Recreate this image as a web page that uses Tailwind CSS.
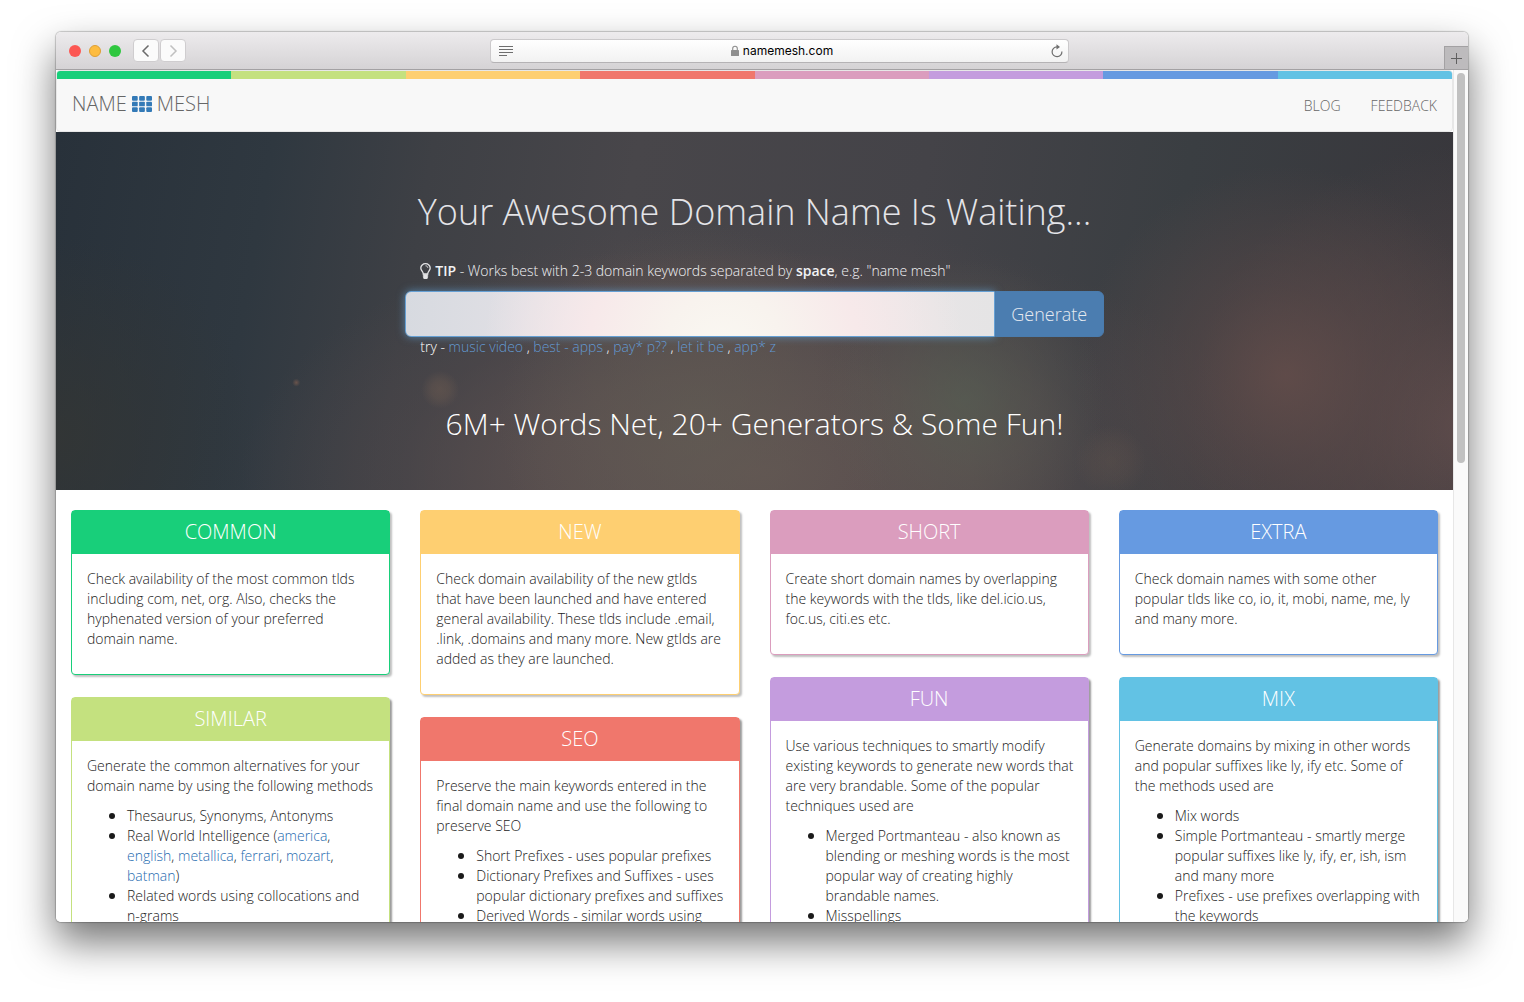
<!DOCTYPE html>
<html lang="en">
<head>
<meta charset="utf-8">
<title>Name Mesh</title>
<script src="https://cdn.jsdelivr.net/npm/@tailwindcss/browser@4"></script>
</head>
<body class="bg-white font-['Open_Sans',sans-serif] text-sm/5 font-light text-[#1a1a1a]">
<div class="flex h-screen flex-col overflow-hidden px-14 pt-8 pb-20">
  <div class="flex min-h-0 flex-1 flex-col rounded-[5px] shadow-[0_0_1px_1px_rgba(0,0,0,0.2),0_20px_40px_rgba(0,0,0,0.55)]">
    <!-- Browser toolbar -->
    <header class="flex h-[38px] shrink-0 rounded-t-[5px] border-b border-[#a3a1a3] bg-linear-to-b from-[#edebed] to-[#d5d3d5]">
      <div class="flex flex-1 items-center pl-[13px]">
        <div class="flex gap-2">
          <button aria-label="Close" class="size-3 rounded-full bg-[#fc5753]"></button>
          <button aria-label="Minimize" class="size-3 rounded-full border border-[#de9f34] bg-[#fdbc40]"></button>
          <button aria-label="Zoom" class="size-3 rounded-full bg-[#2fc73f]"></button>
        </div>
        <div class="ml-3 flex gap-px">
          <button aria-label="Back" class="flex h-[23px] w-[26px] items-center justify-center rounded border border-[#cfcdcf] bg-[#fbfbfb]">
            <svg class="size-3.5" viewBox="0 0 14 14" fill="none" stroke="#6b6b6b" stroke-width="1.5"><path d="M9.5 1.5 4 7l5.500 5.500"/></svg>
          </button>
          <button aria-label="Forward" class="flex h-[23px] w-[26px] items-center justify-center rounded border border-[#cfcdcf] bg-[#fbfbfb]">
            <svg class="size-3.5" viewBox="0 0 14 14" fill="none" stroke="#c0c0c0" stroke-width="1.500"><path d="M4.500 1.500 10 7l-5.500 5.500"/></svg>
          </button>
        </div>
      </div>
      <div class="ml-[22px] flex w-[41%] items-center">
        <div class="flex h-6 w-full items-center rounded border border-[#cbc9cb] border-b-[#b5b3b5] bg-linear-to-b from-white to-[#f2f2f2] pr-[5px] pl-2">
          <svg class="h-3 w-3.5" viewBox="0 0 14 12" stroke="#6e6e6e" stroke-width="1"><path d="M0 1.500h14M0 4.500h14M0 7.500h14M0 10.500h8"/></svg>
          <div class="flex flex-1 items-center justify-center gap-1">
            <svg class="h-3 w-2" viewBox="0 0 8 12"><rect y="5" width="8" height="6" rx=".6" fill="#8e8e8e"/><path d="M1.700 5.500V3.600a2.300 2.300 0 0 1 4.600 0v1.900" fill="none" stroke="#8e8e8e" stroke-width="1.100"/></svg>
            <span class="font-['Inter',sans-serif] text-xs/4 font-normal text-black">namemesh.com</span>
          </div>
          <button aria-label="Reload"><svg class="h-3.5 w-3" viewBox="0 0 12 14" fill="none" stroke="#6e6e6e" stroke-width="1.200"><path d="M10.900 7.500A4.900 4.900 0 1 1 6 2.900"/><path d="M5.500.2 9 2.900 5.500 5.600Z" fill="#6e6e6e" stroke="none"/></svg></button>
        </div>
      </div>
      <div class="flex flex-1 items-end justify-end">
        <button aria-label="New tab" class="flex h-[23px] w-6 items-center justify-center border-t border-l border-[#a3a1a3] bg-[#bdbbbd]">
          <svg class="size-[11px]" viewBox="0 0 11 11" stroke="#606060" stroke-width="1"><path d="M0 5.500h11M5.500 0v11"/></svg>
        </button>
      </div>
    </header>

    <!-- Page viewport -->
    <div class="flex min-h-0 flex-1 overflow-hidden rounded-b-[5px] bg-white">
      <div class="min-w-0 flex-1">
        <nav class="overflow-hidden rounded border border-[#e7e7e7] bg-[#f8f8f8]">
          <div class="grid h-2 grid-cols-8">
            <div class="bg-[#18cf7a]"></div><div class="bg-[#c4e17f]"></div><div class="bg-[#fecf71]"></div><div class="bg-[#f0776c]"></div>
            <div class="bg-[#db9dbe]"></div><div class="bg-[#c49cde]"></div><div class="bg-[#669ae1]"></div><div class="bg-[#62c2e4]"></div>
          </div>
          <div class="flex h-[52px] items-baseline justify-between px-[15px] pt-[15px] text-[#666]">
            <a href="#" class="flex items-center gap-[5px] text-xl/5">NAME
              <svg class="h-4 w-5" viewBox="0 0 21 17" preserveAspectRatio="none" fill="#337ab7"><rect width="6" height="5" rx="1"/><rect x="7.500" width="6" height="5" rx="1"/><rect x="15" width="6" height="5" rx="1"/><rect y="6" width="6" height="5" rx="1"/><rect x="7.500" y="6" width="6" height="5" rx="1"/><rect x="15" y="6" width="6" height="5" rx="1"/><rect y="12" width="6" height="5" rx="1"/><rect x="7.500" y="12" width="6" height="5" rx="1"/><rect x="15" y="12" width="6" height="5" rx="1"/></svg>
              MESH</a>
            <div class="flex gap-[30px]"><a href="#">BLOG</a><a href="#">FEEDBACK</a></div>
          </div>
        </nav>

        <section class="h-[358px] bg-[#48464a] bg-[radial-gradient(circle_at_17.2%_70%,#6a544c_0,transparent_4px),radial-gradient(circle_at_27.5%_72%,rgba(107,90,80,0.55)_0,rgba(107,90,80,0.4)_9px,transparent_19px),radial-gradient(circle_at_75.5%_92%,rgba(106,88,78,0.3)_0,rgba(106,88,78,0.2)_18px,transparent_36px),radial-gradient(circle_at_65%_75%,rgba(88,98,84,0.6)_0,rgba(92,94,84,0.35)_70px,transparent_140px),radial-gradient(circle_at_46%_82%,rgba(98,94,84,0.6)_0,rgba(98,92,84,0.4)_90px,transparent_200px),radial-gradient(circle_at_88%_68%,rgba(102,78,75,0.8)_0,rgba(94,74,73,0.5)_90px,transparent_210px),radial-gradient(circle_at_101%_82%,rgba(108,84,82,0.7)_0,rgba(100,80,78,0.4)_110px,transparent_280px),radial-gradient(ellipse_at_50%_95%,rgba(98,84,82,0.95)_0,rgba(92,80,79,0.8)_22%,rgba(84,74,76,0.4)_36%,transparent_52%),radial-gradient(ellipse_at_47%_50%,rgba(98,78,80,0.6)_0,transparent_25%),radial-gradient(circle_at_0%_85%,rgba(52,54,52,0.8)_0,transparent_200px),linear-gradient(100deg,#28313a_0%,#2f3840_15%,#3e4045_26%,#48464a_40%,#444348_60%,#3a3e42_78%,#38363b_100%)]">
          <div class="mx-auto flex w-1/2 flex-col pt-14">
            <h1 class="text-center text-4xl/12 whitespace-nowrap text-[#e4e4e8]">Your Awesome Domain Name Is Waiting...</h1>
            <label for="q" class="mt-[25px] flex items-center px-[15px] text-[#f2f2f4]">
              <svg class="mr-1 h-4 w-[11px]" viewBox="0 0 11 16" fill="none" stroke="#e4e4e6" stroke-width="1.300"><path d="M3.300 11C3.300 8.500.800 7.800.800 5a4.700 4.300 0 0 1 9.400 0c0 2.800-2.500 3.500-2.500 6Z"/><path d="M5.500 2.800c1.400 0 2.200.800 2.300 2" stroke-width=".9"/><path d="M3.300 11.500h4.400V14a2 2 0 0 1-4.400 0Z" fill="#e4e4e6" stroke-width=".6"/></svg>
              <span class="whitespace-nowrap"><b class="font-semibold">TIP</b> - Works best with 2-3 domain keywords separated by <b class="font-semibold">space</b>, e.g. "name mesh"</span>
            </label>
            <form class="mt-[10px] flex h-[46px]">
              <input id="q" type="text" class="min-w-0 flex-1 rounded-l-md border border-[#66a0d4] bg-[radial-gradient(circle_at_54%_140%,#faf8f2_0,#f8f3ee_60px,#f7e9ea_135px,rgba(240,230,233,0)_240px),linear-gradient(90deg,#d7dae0,#e6e2e7_30%,#ece7e8_70%,#e5e4e5)] px-4 text-lg shadow-[0_0_8px_rgba(102,175,233,0.6)]">
              <button type="button" class="w-[109px] rounded-r-md border border-[#4a7cae] bg-[#4b7db0] text-lg text-[#e6eaf0]">Generate</button>
            </form>
            <p class="px-[15px] whitespace-nowrap text-white">try - <a href="#" class="text-[#6299d2]">music video</a> , <a href="#" class="text-[#6299d2]">best - apps</a> , <a href="#" class="text-[#6299d2]">pay* p??</a> , <a href="#" class="text-[#6299d2]">let it be</a> , <a href="#" class="text-[#6299d2]">app* z</a></p>
            <h2 class="mt-12 text-center text-[30px]/[38px] whitespace-nowrap text-white">6M+ Words Net, 20+ Generators &amp; Some Fun!</h2>
          </div>
        </section>

        <main class="grid grid-cols-4 items-start gap-[30px] px-[15px] pt-5">
          <div class="flex flex-col gap-[22px]">
            <section class="rounded border border-[#18cf7a] bg-white shadow-[2px_2px_2px_rgba(0,0,0,0.25)]">
              <h3 class="h-[43px] bg-[#18cf7a] py-2.5 text-center text-xl/[22px] text-white">COMMON</h3>
              <p class="px-[15px] pt-[15px] pb-[25px]">Check availability of the most common tlds including com, net, org. Also, checks the hyphenated version of your preferred domain name.</p>
            </section>
            <section class="rounded border border-[#c4e17f] bg-white shadow-[2px_2px_2px_rgba(0,0,0,0.4)]">
              <h3 class="h-[43px] bg-[#c4e17f] py-2.5 text-center text-xl/[22px] text-white">SIMILAR</h3>
              <div class="flex flex-col gap-2.5 px-[15px] pt-[15px] pb-[25px]">
                <p>Generate the common alternatives for your domain name by using the following methods</p>
                <ul class="list-disc pl-10 marker:text-base/3">
                  <li>Thesaurus, Synonyms, Antonyms</li>
                  <li>Real World Intelligence (<a href="#" class="text-[#1f6cb0]">america</a>, <a href="#" class="text-[#1f6cb0]">english</a>, <a href="#" class="text-[#1f6cb0]">metallica</a>, <a href="#" class="text-[#1f6cb0]">ferrari</a>, <a href="#" class="text-[#1f6cb0]">mozart</a>, <a href="#" class="text-[#1f6cb0]">batman</a>)</li>
                  <li>Related words using collocations and n-grams</li>
                </ul>
              </div>
            </section>
          </div>
          <div class="flex flex-col gap-[22px]">
            <section class="rounded border border-[#fecf71] bg-white shadow-[2px_2px_2px_rgba(0,0,0,0.25)]">
              <h3 class="h-[43px] bg-[#fecf71] py-2.5 text-center text-xl/[22px] text-white">NEW</h3>
              <p class="px-[15px] pt-[15px] pb-[25px]">Check domain availability of the new gtlds that have been launched and have entered general availability. These tlds include .email, .link, .domains and many more. New gtlds are added as they are launched.</p>
            </section>
            <section class="rounded border border-[#f0776c] bg-white shadow-[2px_2px_2px_rgba(0,0,0,0.4)]">
              <h3 class="h-[43px] bg-[#f0776c] py-2.5 text-center text-xl/[22px] text-white">SEO</h3>
              <div class="flex flex-col gap-2.5 px-[15px] pt-[15px] pb-[25px]">
                <p>Preserve the main keywords entered in the final domain name and use the following to preserve SEO</p>
                <ul class="list-disc pl-10 marker:text-base/3">
                  <li>Short Prefixes - uses popular prefixes</li>
                  <li>Dictionary Prefixes and Suffixes - uses popular dictionary prefixes and suffixes</li>
                  <li>Derived Words - similar words using</li>
                </ul>
              </div>
            </section>
          </div>
          <div class="flex flex-col gap-[22px]">
            <section class="rounded border border-[#db9dbe] bg-white shadow-[2px_2px_2px_rgba(0,0,0,0.25)]">
              <h3 class="h-[43px] bg-[#db9dbe] py-2.5 text-center text-xl/[22px] text-white">SHORT</h3>
              <p class="px-[15px] pt-[15px] pb-[25px]">Create short domain names by overlapping the keywords with the tlds, like del.icio.us, foc.us, citi.es etc.</p>
            </section>
            <section class="rounded border border-[#c49cde] bg-white shadow-[2px_2px_2px_rgba(0,0,0,0.4)]">
              <h3 class="h-[43px] bg-[#c49cde] py-2.5 text-center text-xl/[22px] text-white">FUN</h3>
              <div class="flex flex-col gap-2.5 pt-[15px] pr-3 pb-[25px] pl-[15px]">
                <p>Use various techniques to smartly modify existing keywords to generate new words that are very brandable. Some of the popular techniques used are</p>
                <ul class="list-disc pl-10 marker:text-base/3">
                  <li>Merged Portmanteau - also known as blending or meshing words is the most popular way of creating highly brandable names.</li>
                  <li>Misspellings</li>
                </ul>
              </div>
            </section>
          </div>
          <div class="flex flex-col gap-[22px]">
            <section class="rounded border border-[#669ae1] bg-white shadow-[2px_2px_2px_rgba(0,0,0,0.25)]">
              <h3 class="h-[43px] bg-[#669ae1] py-2.5 text-center text-xl/[22px] text-white">EXTRA</h3>
              <p class="px-[15px] pt-[15px] pb-[25px]">Check domain names with some other popular tlds like co, io, it, mobi, name, me, ly and many more.</p>
            </section>
            <section class="rounded border border-[#62c2e4] bg-white shadow-[2px_2px_2px_rgba(0,0,0,0.4)]">
              <h3 class="h-[43px] bg-[#62c2e4] py-2.5 text-center text-xl/[22px] text-white">MIX</h3>
              <div class="flex flex-col gap-2.5 px-[15px] pt-[15px] pb-[25px]">
                <p>Generate domains by mixing in other words and popular suffixes like ly, ify etc. Some of the methods used are</p>
                <ul class="list-disc pl-10 marker:text-base/3">
                  <li>Mix words</li>
                  <li>Simple Portmanteau - smartly merge popular suffixes like ly, ify, er, ish, ism and many more</li>
                  <li>Prefixes - use prefixes overlapping with the keywords</li>
                </ul>
              </div>
            </section>
          </div>
        </main>
      </div>
      <!-- Scrollbar -->
      <div class="w-[15px] shrink-0 border-l border-[#e7e7e7] bg-[#fafafa] px-[3px] pt-[3px]">
        <div class="h-[390px] rounded-full bg-[#c1c1c1]"></div>
      </div>
    </div>
  </div>
</div>
</body>
</html>
